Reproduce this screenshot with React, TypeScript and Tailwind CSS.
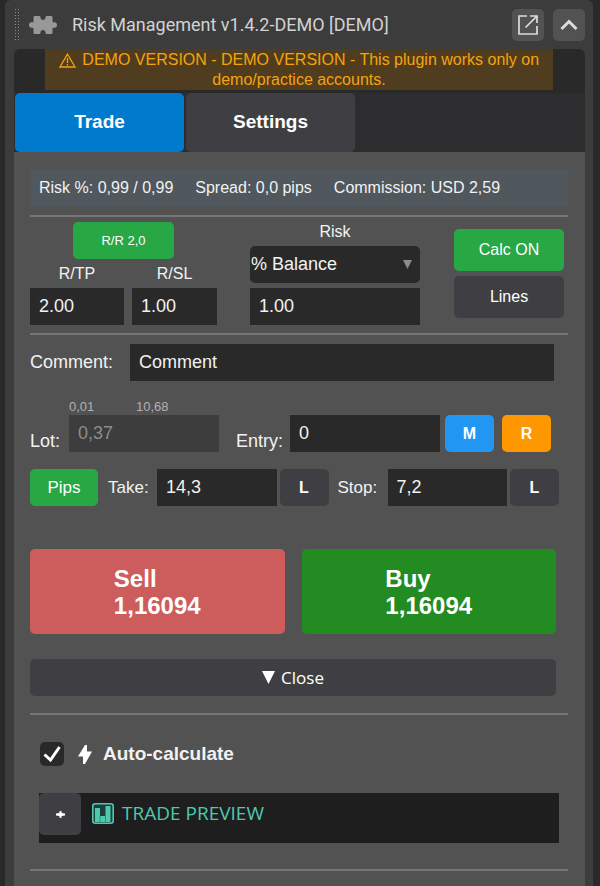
import { useState } from "react";
import type { ComponentProps, ReactNode } from "react";
import { clsx } from "clsx";

const focusRing = "focus-visible:outline-2 focus-visible:outline-[#4ea6ea]";

function TextBox({ className, ...props }: ComponentProps<"input">) {
  return (
    <input
      type="text"
      className={clsx(
        "h-[37px] min-w-0 rounded-none bg-[#292929] px-[9px] text-[18px] text-[#f2f2f2] disabled:bg-[#3d3d3d] disabled:text-[#8c8c8c]",
        focusRing,
        className,
      )}
      {...props}
    />
  );
}

function Button({ className, ...props }: ComponentProps<"button">) {
  return <button type="button" className={clsx("shrink-0 rounded-[5px] text-white", focusRing, className)} {...props} />;
}

function Rule({ className }: { className?: string }) {
  return <hr className={clsx("h-[2px] border-0 bg-[#757575]", className)} />;
}

function PuzzleIcon() {
  return (
    <svg width="28" height="20" viewBox="0 0 28 20" fill="#989898" aria-hidden="true">
      <path d="M6 1h4c1 0 1.500.5 1.500 1.500C11.500 4 12.500 5 14 5s2.500-1 2.500-2.500C16.500 1.500 17 1 18 1h4c1 0 1.500.5 1.500 1.500v4c0 .8.500 1 1.500.8 2-.3 3 1 3 2.700s-1 3-3 2.700c-1-.2-1.500 0-1.500.8v4c0 1-.5 1.500-1.500 1.500h-4c-1 0-1.500-.5-1.500-1.500C16.500 16 15.500 15 14 15s-2.500 1-2.500 2.500c0 1-.5 1.500-1.500 1.500H6c-1 0-1.500-.5-1.500-1.500v-4c0-.8-.5-1-1.500-.8-2 .3-3-1-3-2.700s1-3 3-2.700c1 .2 1.500 0 1.500-.8v-4C4.500 1.500 5 1 6 1z" />
    </svg>
  );
}

function PopOutIcon() {
  return (
    <svg width="20" height="20" viewBox="0 0 20 20" fill="none" stroke="#dcdcdc" strokeWidth="1.7" aria-hidden="true">
      <path d="M9 1H1v18h18v-8" />
      <path d="M12 1h7v7M19 1 7.500 12.500" />
    </svg>
  );
}

function WarningIcon() {
  return (
    <svg width="17" height="15" viewBox="0 0 17 15" fill="none" stroke="#f5a30b" strokeWidth="1.300" className="mr-[2px] inline-block align-[-3px]" aria-hidden="true">
      <path d="M8.500 1.200 1 14h15zM8.500 5v5M8.500 11v1.600" />
    </svg>
  );
}

function BarsIcon() {
  return (
    <svg width="22" height="21" viewBox="0 0 22 21" aria-hidden="true">
      <rect x="0.800" y="0.800" width="20.400" height="19.400" rx="2.500" fill="#1c3f39" stroke="#4ec9b0" strokeWidth="1.600" />
      <path d="M3 5h5v8h5.500V3h5v16H3z" fill="#4ec9b0" />
      <path d="M8 13v6M13.500 13v6" stroke="#2f8a79" />
    </svg>
  );
}

function Quote({ side, className }: { side: string; className: string }) {
  return (
    <Button className={clsx("flex h-[85px] flex-1 items-center justify-center text-[24px] leading-[27px] font-bold", className)}>
      <span className="text-left">
        {side}
        <br />
        1,16094
      </span>
    </Button>
  );
}

function Tab({ active, onClick, children }: { active: boolean; onClick: () => void; children: ReactNode }) {
  return (
    <button
      type="button"
      role="tab"
      aria-selected={active}
      onClick={onClick}
      className={clsx("h-[59px] w-[169px] rounded-[5px] text-[19px] font-bold text-white", focusRing, active ? "bg-[#007acc]" : "bg-[#3f3f43]")}
    >
      {children}
    </button>
  );
}

export default function App() {
  const [tab, setTab] = useState("Trade");
  const [auto, setAuto] = useState(true);

  return (
    <div className="flex min-h-screen flex-col bg-[#292929] pr-[7px] pl-[5px] font-['Liberation_Sans',Arial,sans-serif] text-[16px] text-[#f2f2f2]">
      <div className="flex grow flex-col rounded-t-md bg-[#3c3c3c] pr-2 pl-[9px]">
        <header className="flex h-[49px] items-center">
          <div className="h-[34px] w-[6px] bg-[radial-gradient(#8c8c8c_0.8px,transparent_1px)] bg-[length:3px_3px]" />
          <div className="ml-[9px]">
            <PuzzleIcon />
          </div>
          <h1 className="ml-[15px] grow font-[Roboto,sans-serif] text-[18px] text-[#d2d2d2]">Risk Management v1.4.2-DEMO [DEMO]</h1>
          <Button aria-label="Open in window" className="flex size-8 items-center justify-center bg-[#525252]">
            <PopOutIcon />
          </Button>
          <Button aria-label="Collapse" className="ml-[9px] flex size-8 items-center justify-center bg-[#525252]">
            <svg width="18" height="12" viewBox="0 0 18 12" fill="none" stroke="#dcdcdc" strokeWidth="3" aria-hidden="true">
              <path d="m1.500 10 7.500-7.500L16.500 10" />
            </svg>
          </Button>
        </header>

        <div className="flex grow flex-col overflow-hidden rounded-t-md bg-[#292929]">
          <p className="mr-8 ml-[31px] bg-[#503d20] px-3 pt-px text-center text-[16px] leading-[20px] text-[#f5a30b]">
            <WarningIcon /> DEMO VERSION - DEMO VERSION - This plugin works only on demo/practice accounts.
          </p>
          <div role="tablist" className="mt-[3px] flex gap-[2px] bg-[#2d2d2f] pl-px">
            <Tab active={tab === "Trade"} onClick={() => setTab("Trade")}>
              Trade
            </Tab>
            <Tab active={tab === "Settings"} onClick={() => setTab("Settings")}>
              Settings
            </Tab>
          </div>

          <main className="grow bg-[#525252] pt-[17px] pr-[17px] pl-4">
            <div className="flex h-[38px] items-center gap-[22px] bg-[#50575d] px-[9px] whitespace-nowrap">
              <span>Risk %: 0,99 / 0,99</span>
              <span>Spread: 0,0 pips</span>
              <span>Commission: USD 2,59</span>
            </div>
            <Rule className="mt-2" />

            <section className="flex pt-[5px] pr-1">
              <div className="w-[187px] shrink-0">
                <Button className="ml-[43px] block h-[37px] w-[101px] bg-[#28a745] text-[13px]">R/R 2,0</Button>
                <div className="mt-[5px] flex gap-2">
                  <div className="flex w-[94px] flex-col">
                    <label htmlFor="rtp" className="h-6 text-center leading-5">
                      R/TP
                    </label>
                    <TextBox id="rtp" defaultValue="2.00" />
                  </div>
                  <div className="flex w-[85px] flex-col">
                    <label htmlFor="rsl" className="h-6 text-center leading-5">
                      R/SL
                    </label>
                    <TextBox id="rsl" defaultValue="1.00" />
                  </div>
                </div>
              </div>
              <div className="ml-[33px] flex min-w-0 flex-1 flex-col">
                <label htmlFor="risk" className="h-6 text-center leading-[19px]">
                  Risk
                </label>
                <div className="relative">
                  <select
                    id="risk"
                    className={clsx("h-[37px] w-full appearance-none rounded-[5px] bg-[#292929] pr-8 pl-px text-[18px] text-[#f2f2f2]", focusRing)}
                  >
                    <option>% Balance</option>
                    <option>Fixed</option>
                  </select>
                  <svg width="9" height="9" viewBox="0 0 9 9" className="pointer-events-none absolute top-[14px] right-2" fill="#8c8c8c" aria-hidden="true">
                    <path d="M0 0h9L4.500 9z" />
                  </svg>
                </div>
                <TextBox aria-label="Risk value" defaultValue="1.00" className="mt-[5px]" />
              </div>
              <div className="ml-[34px] flex w-[110px] shrink-0 flex-col gap-[5px] pt-[7px]">
                <Button className="h-[42px] bg-[#28a745]">Calc ON</Button>
                <Button className="h-[42px] bg-[#3f3f43]">Lines</Button>
              </div>
            </section>
            <Rule className="mt-2" />

            <section className="mt-[9px] flex items-center pr-[14px]">
              <label htmlFor="comment" className="w-[100px] text-[18px]">
                Comment:
              </label>
              <TextBox id="comment" defaultValue="Comment" className="grow" />
            </section>

            <section className="mt-[18px] flex items-end pr-[17px]">
              <label htmlFor="lot" className="w-[39px] text-[18px] leading-[22px]">
                Lot:
              </label>
              <div className="flex min-w-0 flex-1 flex-col">
                <div className="flex h-4 text-[13px] leading-4 text-[#b0b0b0]">
                  <span className="w-[67px]">0,01</span>
                  <span>10,68</span>
                </div>
                <TextBox id="lot" defaultValue="0,37" disabled />
              </div>
              <label htmlFor="entry" className="ml-[17px] w-[54px] text-[18px] leading-[22px]">
                Entry:
              </label>
              <div className="flex min-w-0 flex-1 flex-col">
                <TextBox id="entry" defaultValue="0" />
              </div>
              <Button className="ml-[5px] h-[37px] w-[49px] bg-[#2196f3] font-bold">M</Button>
              <Button className="ml-2 h-[37px] w-[49px] bg-[#ff9800] font-bold">R</Button>
            </section>

            <section className="mt-[17px] flex items-center pr-[9px]">
              <Button className="h-[37px] w-[68px] bg-[#28a745] text-[17px]">Pips</Button>
              <label htmlFor="take" className="ml-[10px] w-[49px] text-[17px]">
                Take:
              </label>
              <TextBox id="take" defaultValue="14,3" className="flex-1" />
              <Button className="ml-[3px] h-[37px] w-[49px] bg-[#3f3f43] font-bold">L</Button>
              <label htmlFor="stop" className="ml-[9px] w-[50px] text-[17px]">
                Stop:
              </label>
              <TextBox id="stop" defaultValue="7,2" className="flex-1" />
              <Button className="ml-[3px] h-[37px] w-[49px] bg-[#3f3f43] font-bold">L</Button>
            </section>

            <section className="mt-[43px] flex gap-[17px] pr-3">
              <Quote side="Sell" className="bg-[#cd5c5c]" />
              <Quote side="Buy" className="bg-[#228b22]" />
            </section>

            <div className="mt-[25px] flex pr-3">
              <Button className="flex h-[37px] grow items-center justify-center gap-[6px] bg-[#3f3f43] font-['Open_Sans',sans-serif] text-[17px]">
                <svg width="13" height="13" viewBox="0 0 13 13" fill="#fff" aria-hidden="true">
                  <path d="M0 0h13L6.500 13z" />
                </svg>
                Close
              </Button>
            </div>
            <Rule className="mt-[17px]" />

            <label className="mt-[27px] ml-[10px] flex w-fit items-center leading-6">
              <span className="relative flex size-6">
                <input
                  type="checkbox"
                  checked={auto}
                  onChange={(e) => setAuto(e.target.checked)}
                  className={clsx("size-6 appearance-none rounded-[5px] bg-[#292929]", focusRing)}
                />
                {auto && (
                  <svg width="24" height="24" viewBox="0 0 24 24" fill="none" stroke="#fff" strokeWidth="3" className="pointer-events-none absolute inset-0" aria-hidden="true">
                    <path d="m4.500 12.500 6 5.500L19.500 5" />
                  </svg>
                )}
              </span>
              <svg width="14" height="19" viewBox="0 0 14 19" fill="#fff" className="ml-[14px]" aria-hidden="true">
                <path d="M7 0h2v6.500h5L7 19H5v-7.500H0z" />
              </svg>
              <span className="ml-[11px] text-[19px] font-bold">Auto-calculate</span>
            </label>

            <section className="mt-[27px] mr-[9px] ml-[9px] flex h-[50px] bg-[#1e1e1e]">
              <Button aria-label="Expand trade preview" className="flex size-[42px] items-center justify-center bg-[#3f3f43]">
                <svg width="9" height="7" viewBox="0 0 9 7" fill="#fff" aria-hidden="true">
                  <path d="M0 2.500 3.200 2 3.800 0h1.400L5.800 2 9 2.500v2L5.800 5 5.200 7H3.800L3.200 5 0 4.500z" />
                </svg>
              </Button>
              <h2 className="ml-[11px] flex h-10 items-center gap-2 font-['Open_Sans',sans-serif] text-[19px] font-medium text-[#4ec9b0]">
                <BarsIcon />
                TRADE PREVIEW
              </h2>
            </section>
            <Rule className="mt-[26px] mb-[15px]" />
          </main>
        </div>
      </div>
    </div>
  );
}
